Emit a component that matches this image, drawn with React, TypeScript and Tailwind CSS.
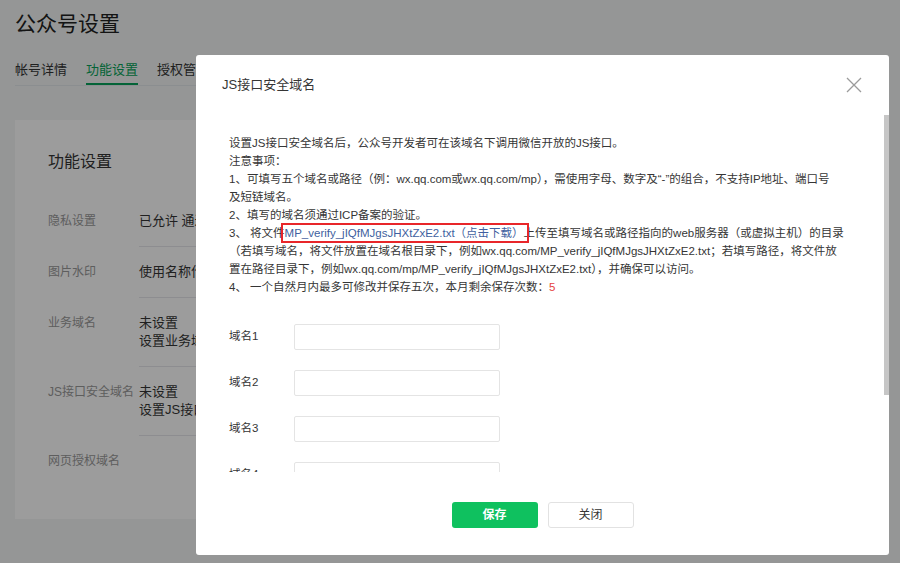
import React from 'react';

const rows = [
  { label: '隐私设置', lines: ['已允许 通过名称搜索到本帐号'] },
  { label: '图片水印', lines: ['使用名称作为水印'] },
  { label: '业务域名', lines: ['未设置', '设置业务域名后，在微信内访问该域名下页面时，不会被重新排版'] },
  { label: 'JS接口安全域名', lines: ['未设置', '设置JS接口安全域名后，公众号开发者可在该域名下调用微信开放的JS接口'] },
  { label: '网页授权域名', lines: [] as string[] },
];

const fileName = 'MP_verify_jIQfMJgsJHXtZxE2.txt';

function CloseIcon() {
  return (
    <svg width="16" height="16" viewBox="0 0 16 16" fill="none">
      <path d="M1 1L15 15M15 1L1 15" stroke="#9b9b9b" strokeWidth="1.3" />
    </svg>
  );
}

export default function App() {
  return (
    <div className="relative h-[563px] overflow-hidden bg-[#f3f6f5] font-['Liberation_Sans','Noto_Sans_CJK_SC',sans-serif] text-[#353535]">
      {/* page behind the dialog */}
      <div className="px-[15px] pt-[9px]">
        <h1 className="text-[21px] leading-[30px] font-normal text-[#222]">公众号设置</h1>
        <div className="mt-[21px] flex gap-[19px] border-b border-[#e4e8eb] text-[13px] leading-[20px]">
          <div className="pb-[5px]">帐号详情</div>
          <div className="pb-[3px] border-b-2 border-[#07a35a] text-[#07a35a]">功能设置</div>
          <div className="pb-[5px]">授权管理</div>
        </div>
        <div className="mt-[34px] h-[399px] bg-white pl-[33px] pt-[30px]">
          <h2 className="text-[16px] leading-[24px] font-normal">功能设置</h2>
          <div className="mt-[22px] text-[13px] leading-[18px]">
            {rows.map((r) => (
              <div key={r.label} className="flex">
                <div className="w-[91px] whitespace-nowrap pt-[16px] text-[12px] text-[#9a9a9a]">{r.label}</div>
                <div className={`flex-1 pt-[16px] pb-[16px] ${r.lines.length ? 'border-b border-[#e7e7eb]' : ''}`}>
                  {r.lines.map((l) => (
                    <div key={l} className="whitespace-nowrap">{l}</div>
                  ))}
                </div>
              </div>
            ))}
          </div>
        </div>
      </div>

      {/* mask */}
      <div className="absolute inset-0 bg-black/[0.39]" />

      {/* dialog */}
      <div className="absolute left-[196px] top-[55px] flex h-[500px] w-[693px] flex-col rounded-[3px] bg-white">
        <div className="flex h-[60px] shrink-0 items-center justify-between pl-[26px] pr-[27px]">
          <div className="text-[13px]">JS接口安全域名</div>
          <CloseIcon />
        </div>

        <div className="flex-1 overflow-hidden pl-[33px] pr-[30px] pt-[19px] pb-[27px]">
          <div className="text-[11.5px] leading-[18px] whitespace-nowrap">
            <div>设置JS接口安全域名后，公众号开发者可在该域名下调用微信开放的JS接口。</div>
            <div>注意事项：</div>
            <div>1、可填写五个域名或路径（例：wx.qq.com或wx.qq.com/mp），需使用字母、数字及“-”的组合，不支持IP地址、端口号</div>
            <div>及短链域名。</div>
            <div>2、填写的域名须通过ICP备案的验证。</div>
            <div>
              3、 将文件
              <span className="relative text-[#3f5fa0]">
                {fileName}（点击下载）
                <span className="absolute -left-[4px] -right-[5px] -top-[4px] -bottom-[4px] border-2 border-[#e8262a]" />
              </span>
              上传至填写域名或路径指向的web服务器（或虚拟主机）的目录
            </div>
            <div>（若填写域名，将文件放置在域名根目录下，例如wx.qq.com/{fileName}；若填写路径，将文件放</div>
            <div>置在路径目录下，例如wx.qq.com/mp/{fileName}），并确保可以访问。</div>
            <div>
              4、 一个自然月内最多可修改并保存五次，本月剩余保存次数：<span className="text-[#e64340]">5</span>
            </div>
          </div>

          <div className="mt-[28px] flex flex-col gap-[20px] text-[11.5px]">
            {[1, 2, 3, 4, 5].map((n) => (
              <div key={n} className="flex items-center">
                <label className="w-[65px]">域名{n}</label>
                <input className="h-[26px] w-[206px] rounded-[2px] border border-[#e4e4e4] px-2 outline-none" />
              </div>
            ))}
          </div>
        </div>

        {/* scrollbar thumb of the body */}
        <div className="absolute right-0 top-[60px] h-[280px] w-[5px] bg-[#c6c6c6]" />

        <div className="flex shrink-0 justify-center gap-[10px] pt-[30px] pb-[27px] text-[12px]">
          <button className="h-[26px] w-[86px] rounded-[3px] bg-[#0fc15f] font-bold text-white">保存</button>
          <button className="h-[26px] w-[86px] rounded-[3px] border border-[#e2e2e2] bg-white text-[#353535]">关闭</button>
        </div>
      </div>
    </div>
  );
}
